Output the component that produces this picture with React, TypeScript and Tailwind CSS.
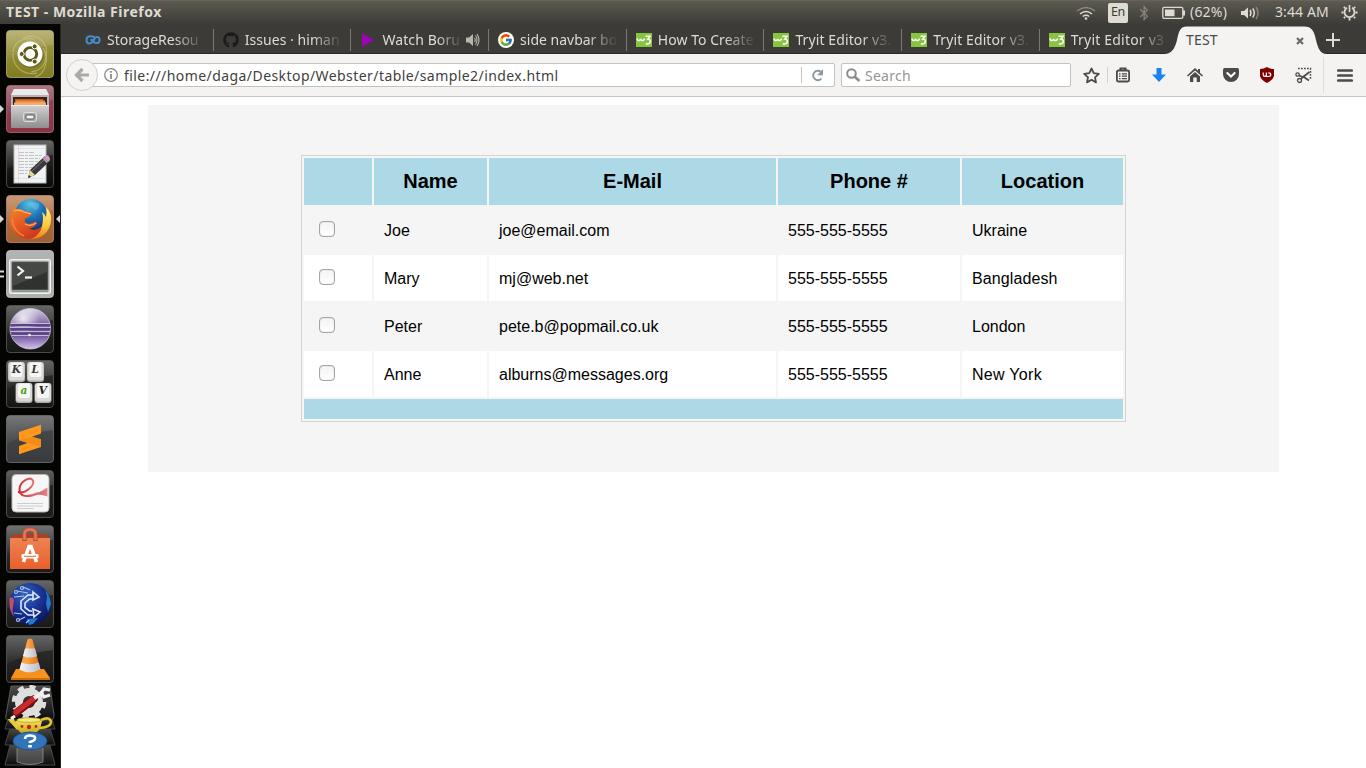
import React from "react";
import { FaGithub, FaBluetoothB } from "react-icons/fa";
import { FcGoogle } from "react-icons/fc";

const UI = "font-['Noto_Sans',sans-serif]";

function TileBase({ id, top, bottom, edge = "#6b6b69" }: { id: string; top: string; bottom: string; edge?: string }) {
  return (
    <>
      <defs>
        <linearGradient id={id} x1="0" y1="0" x2="0" y2="1">
          <stop offset="0" stopColor={top} />
          <stop offset="1" stopColor={bottom} />
        </linearGradient>
        <linearGradient id={id + "g"} x1="0" y1="0" x2="0" y2="1">
          <stop offset="0" stopColor="#fff" stopOpacity=".24" />
          <stop offset="1" stopColor="#fff" stopOpacity=".03" />
        </linearGradient>
      </defs>
      <rect x=".5" y=".5" width="47" height="47" rx="3.5" fill={`url(#${id})`} stroke={edge} strokeOpacity=".65" />
      <path d="M1 4Q1 1 4 1H44Q47 1 47 4V15Q24 17 1 29Z" fill={`url(#${id}g)`} />
    </>
  );
}

function UbuntuIcon() {
  return (
    <svg width="48" height="48" viewBox="0 0 48 48">
      <TileBase id="ub" top="#a39d4c" bottom="#817b20" edge="#c8c48c" />
      <g fill="none" stroke="#d3cf8d" strokeOpacity=".5" strokeWidth="1.3">
        <path d="M17 8C32 2 43 13 40 27C39 36 33 41 25 42" />
        <path d="M7 23C6 36 17 46 31 43" />
        <path d="M7 22C8 12 17 7 28 9" />
        <path d="M37 18C45 32 37 45 29 47" />
      </g>
      <circle cx="24.8" cy="25" r="12.8" fill="#5a5415" opacity=".5" />
      <circle cx="24" cy="24" r="12.5" fill="#fff" />
      <circle cx="24.3" cy="24" r="6.4" fill="none" stroke="#5d5714" strokeWidth="2.9" />
      <g fill="#5d5714" stroke="#fff" strokeWidth="1">
        <circle cx="15.7" cy="24" r="2.5" />
        <circle cx="28.7" cy="16.4" r="2.5" />
        <circle cx="28.7" cy="31.6" r="2.5" />
      </g>
    </svg>
  );
}

function FilesIcon() {
  return (
    <svg width="48" height="48" viewBox="0 0 48 48">
      <TileBase id="fi" top="#934b59" bottom="#8b3244" edge="#b98690" />
      <defs>
        <linearGradient id="cab" x1="0" y1="0" x2="0" y2="1">
          <stop offset="0" stopColor="#d2d2d2" />
          <stop offset="1" stopColor="#8e8e8e" />
        </linearGradient>
      </defs>
      <path d="M8 4H40L43 10V42H5V10Z" fill="#b5b5b5" />
      <path d="M8 4H40L43 10H5Z" fill="#e9e9e9" />
      <rect x="7" y="12" width="34" height="9" fill="#3d2019" />
      <path d="M9 14H37V18H9Z" fill="#ce571e" />
      <path d="M10 15.5H39V20H10Z" fill="#ee8b45" />
      <path d="M8 17.5H40V20H8Z" fill="#f3ab70" />
      <rect x="5" y="20" width="38" height="23" rx="1" fill="url(#cab)" />
      <path d="M5 20.5H43" stroke="#efefef" />
      <rect x="17.5" y="27.5" width="13" height="9" rx="2" fill="#a9a9a9" stroke="#ddd" />
      <rect x="20" y="30" width="8" height="4" rx="1" fill="#f4f4f4" stroke="#555" />
    </svg>
  );
}

function EditorIcon() {
  return (
    <svg width="48" height="48" viewBox="0 0 48 48">
      <TileBase id="ed" top="#333431" bottom="#080908" />
      <rect x="8" y="5" width="32" height="38" fill="#f1f2f2" stroke="#b9babb" />
      <g stroke="#b4b8bc" strokeWidth=".8">
        <path d="M13 12.5H29M13 15.5H36M13 18.5H34M13 21.5H35M13 24.5H31M13 27.5H28M13 30.5H26M13 33.5H21" strokeDasharray="5 1 3 1" />
        <path d="M9 8.5H39M9 38.5H39" stroke="#d9e0eb" />
      </g>
      <path d="M12.5 6V42" stroke="#eccaca" strokeWidth=".7" />
      <path d="M22 38L24 30L39 16L44 21L29 35Z" fill="#383a3c" />
      <path d="M26 31L40 18" stroke="#777" />
      <path d="M22 38L24 30L29 35Z" fill="#e8d795" />
      <path d="M22 38L23 35L25 37Z" fill="#222" />
      <path d="M38 17L41 15Q44 16 44 20L42 22Z" fill="#d39acb" />
      <path d="M36.5 18.5L38 17L42 22L40.5 23Z" fill="#aaa" />
    </svg>
  );
}

function FirefoxIcon() {
  return (
    <svg width="48" height="48" viewBox="0 0 48 48">
      <TileBase id="ff" top="#b6794f" bottom="#a16031" edge="#d2a282" />
      <defs>
        <radialGradient id="globe" cx=".45" cy=".15" r=".85">
          <stop offset="0" stopColor="#54c1e4" />
          <stop offset=".5" stopColor="#1e73b5" />
          <stop offset="1" stopColor="#182d65" />
        </radialGradient>
        <linearGradient id="fox" x1="0" y1="0" x2=".6" y2="1">
          <stop offset="0" stopColor="#f08a2c" />
          <stop offset=".55" stopColor="#e65a22" />
          <stop offset="1" stopColor="#cd3a1d" />
        </linearGradient>
        <linearGradient id="tail" x1="0" y1="0" x2="0" y2="1">
          <stop offset="0" stopColor="#fdf08a" />
          <stop offset=".6" stopColor="#fbc63a" />
          <stop offset="1" stopColor="#ee7a1e" />
        </linearGradient>
      </defs>
      <circle cx="25" cy="20.5" r="16.5" fill="url(#globe)" />
      <path d="M23 8Q28 6 33 9Q34 14 29 15Q25 12 23 8Z" fill="#7ccbe8" opacity=".45" />
      <path d="M40 12Q47 19 44.5 29Q40 44 24 44Q33 40 36 31Q38 22 36 17Q39 19 40 22Q41 17 40 12Z" fill="url(#tail)" />
      <path d="M7.5 11Q9.5 12 10.5 14Q15 13 18 16Q23 16 26 18.5Q24 22 19.5 23.5Q18 26 20 28Q24 30 28 27Q31 26 31 28.5Q28 33 23 33.5Q29 37 35 32Q36 35 32 39Q28 44 22 44Q8 43 4.5 31Q2.5 22 6 16Q6.5 13 7.5 11Z" fill="url(#fox)" />
      <path d="M8 16Q13 14 18 17L25 18.8" fill="none" stroke="#f8b868" strokeWidth="1.2" />
      <path d="M19 29Q25 32 30 28" fill="none" stroke="#f9b368" strokeWidth="1.2" />
      <path d="M6 24Q7 36 18 41" fill="none" stroke="#f39a4c" strokeWidth="1.5" opacity=".7" />
    </svg>
  );
}

function TerminalIcon() {
  return (
    <svg width="48" height="48" viewBox="0 0 48 48">
      <TileBase id="te" top="#9c9c9c" bottom="#b0b0b0" edge="#dedede" />
      <rect x="3.5" y="9.5" width="41" height="34" rx="1.5" fill="#cfcfcf" stroke="#f2f2f2" />
      <rect x="6" y="12" width="36" height="28" fill="#2f322f" stroke="#686868" />
      <path d="M7 13H41V22L7 36Z" fill="#5c5e5a" opacity=".5" />
      <path d="M11.5 16.5L17 21L11.5 25.5" fill="none" stroke="#f3f3f3" strokeWidth="2.2" />
      <path d="M19 27.5H26" stroke="#f3f3f3" strokeWidth="2.2" />
      <path d="M6 41.5H42" stroke="#839d91" />
    </svg>
  );
}

function EclipseIcon() {
  return (
    <svg width="48" height="48" viewBox="0 0 48 48">
      <TileBase id="ec" top="#353633" bottom="#151714" />
      <defs>
        <linearGradient id="ecl" x1="0" y1="0" x2="0" y2="1">
          <stop offset="0" stopColor="#d9cfe6" />
          <stop offset=".4" stopColor="#7b62a0" />
          <stop offset=".65" stopColor="#6a4f94" />
          <stop offset="1" stopColor="#d4c2ee" />
        </linearGradient>
        <radialGradient id="ecs" cx=".33" cy=".25" r=".4">
          <stop offset="0" stopColor="#fff" stopOpacity=".8" />
          <stop offset="1" stopColor="#fff" stopOpacity="0" />
        </radialGradient>
      </defs>
      <circle cx="24.3" cy="23.7" r="20.3" fill="url(#ecl)" stroke="#cfc3df" strokeWidth=".8" />
      <circle cx="24.3" cy="23.7" r="20" fill="url(#ecs)" />
      <path d="M4.3 20H44.3M4.3 24.2H44.3M5.5 28.5H43" stroke="#5a4583" strokeWidth="2.2" />
      <path d="M5 18.5H44M4.2 22.5H44.4M4.6 26.5H44M6 30.5H42.7" stroke="#c9b9de" strokeWidth="1.1" />
      <circle cx="23.5" cy="30" r="1.3" fill="#f4eefb" />
    </svg>
  );
}

function KeysIcon() {
  const keys = [
    { x: 2, y: 2, label: "K", color: "#3a3a3a" },
    { x: 21, y: 2, label: "L", color: "#3a3a3a" },
    { x: 9.5, y: 23, label: "a", color: "#4c9b13" },
    { x: 28.5, y: 23, label: "V", color: "#222" },
  ];
  return (
    <svg width="48" height="48" viewBox="0 0 48 48">
      <TileBase id="ke" top="#343532" bottom="#141613" />
      {keys.map((k) => (
        <g key={k.label} transform={`translate(${k.x} ${k.y})`}>
          <rect width="17" height="20" rx="3" fill="#a9aba8" />
          <rect x=".5" y="0" width="16" height="18.5" rx="3" fill="#d9dad7" />
          <rect x="2.5" y=".5" width="12" height="14.5" rx="2.5" fill="#f6f6f4" />
          <text x="8.3" y="11" textAnchor="middle" fill={k.color} className="font-['DejaVu_Serif',serif] text-[10.5px] font-bold italic">{k.label}</text>
        </g>
      ))}
    </svg>
  );
}

function SublimeIcon() {
  return (
    <svg width="48" height="48" viewBox="0 0 48 48">
      <TileBase id="su" top="#4b4c4e" bottom="#393a3d" edge="#818284" />
      <path d="M13 17L35 9.7V18.5L26 21.7L35 24.3V32L13 39.3V31L21.5 28L13 25.3Z" fill="#ff981b" />
      <path d="M13 25.3L35 32V24.3L26 21.7Z" fill="#ee8a18" opacity=".8" />
    </svg>
  );
}

function ReaderIcon() {
  return (
    <svg width="48" height="48" viewBox="0 0 48 48">
      <TileBase id="re" top="#2b2b2b" bottom="#1b1b1a" />
      <defs>
        <linearGradient id="swash" x1="0" y1="0" x2="1" y2="0">
          <stop offset="0" stopColor="#d32630" />
          <stop offset="1" stopColor="#e58488" />
        </linearGradient>
      </defs>
      <rect x="6" y="4.5" width="37" height="37.5" rx="4" fill="#f6f6f6" stroke="#b7b7b7" />
      <path d="M12 22C20 24 29 15 27 10.500C24 6 14 11 13.500 19C13 27 22 28 32 23" fill="none" stroke="url(#swash)" strokeWidth="2" />
      <path d="M17 25.500Q25 28 41.500 17.500V26.500Q30 22.500 22 26.500Z" fill="url(#swash)" />
      <path d="M11 33.500H37M11 36H37M11 38.500H28" stroke="#c4c4c4" strokeWidth=".8" />
    </svg>
  );
}

function SoftwareIcon() {
  return (
    <svg width="48" height="48" viewBox="0 0 48 48">
      <TileBase id="so" top="#444" bottom="#1a1b1a" />
      <defs>
        <linearGradient id="bag" x1="0" y1="0" x2="0" y2="1">
          <stop stopColor="#ee8255" />
          <stop offset="1" stopColor="#e9602a" />
        </linearGradient>
      </defs>
      <path d="M7 9H41L43 14H5Z" fill="#a64323" />
      <path d="M4 13H44V44H4Z" fill="url(#bag)" />
      <path d="M18.500 16V9Q18.500 4.500 24 4.500Q29.500 4.500 29.500 9V16" fill="none" stroke="#b84f33" strokeWidth="4.500" />
      <path d="M18.500 15V9Q18.500 4.500 24 4.500Q29.500 4.500 29.500 9V15" fill="none" stroke="#df7a5a" strokeWidth="2.500" />
      <path d="M17.500 37L23 21.500H25L30.500 37" fill="none" stroke="#fff" strokeWidth="3.600" />
      <rect x="15.500" y="29" width="17" height="4.500" rx="1" fill="#fff" />
      <path d="M18 31.300H30" stroke="#ea662f" />
    </svg>
  );
}

function NetworkIcon() {
  return (
    <svg width="48" height="48" viewBox="0 0 48 48">
      <TileBase id="ne" top="#343637" bottom="#191a18" />
      <defs>
        <radialGradient id="net" cx=".4" cy=".3" r=".7">
          <stop stopColor="#3b6ac0" />
          <stop offset=".5" stopColor="#1c3697" />
          <stop offset="1" stopColor="#0a1762" />
        </radialGradient>
      </defs>
      <circle cx="24" cy="24" r="21" fill="url(#net)" />
      <path d="M3.500 18Q6 16 8 20L6.500 31L8 37Q2.500 30 3.500 18Z" fill="#c64d67" />
      <path d="M39 10Q44 15 45 24L42 32L40 24L41 16ZM21 39L32 38L27 44L23 45Z" fill="#2278c9" />
      <g fill="none" stroke="#a9c6ee" strokeWidth="1.200">
        <path d="M24 10L17 7M22 13L11 11M18 16L8 17M16 34L8 33M19 37L13 40M23 40L20 43" />
        <circle cx="16" cy="8" r="1.500" />
        <circle cx="10" cy="12" r="1.500" />
        <circle cx="12" cy="40" r="1.500" />
      </g>
      <g fill="none" stroke="#dcebfa" strokeWidth="1.600">
        <path d="M27 15H22L15 21V29L22 35H27M27 19H23.500L19 23V27.500L23.500 31H26" />
        <path d="M27 12L33 17L27 20ZM27 29L34 32L28 37Z" />
      </g>
    </svg>
  );
}

function VlcIcon() {
  return (
    <svg width="48" height="48" viewBox="0 0 48 48">
      <TileBase id="vl" top="#333" bottom="#171817" />
      <defs>
        <linearGradient id="cone" x1="0" y1="0" x2="1" y2="0">
          <stop stopColor="#f7a145" />
          <stop offset=".35" stopColor="#fba64c" />
          <stop offset="1" stopColor="#d96b0c" />
        </linearGradient>
        <linearGradient id="band" x1="0" y1="0" x2="1" y2="0">
          <stop stopColor="#f5f6f8" />
          <stop offset="1" stopColor="#b9bdc6" />
        </linearGradient>
      </defs>
      <path d="M10 34H38L44 43H5Z" fill="#f6931c" />
      <path d="M5 43H44V45H5Z" fill="#cf6d0b" />
      <path d="M21.500 4.500Q24 2.500 26.500 4.500L34.500 35Q24 41 13.500 35Z" fill="url(#cone)" />
      <path d="M19 13.500H29L31 21Q24 24 17 21Z" fill="url(#band)" />
      <path d="M15.300 27.500Q24 31 32.700 27.500L34.500 34.500Q24 40 13.500 34.500Z" fill="url(#band)" />
    </svg>
  );
}

function FoldedStack() {
  return (
    <svg width="52" height="83" viewBox="0 0 52 83">
      <defs>
        <linearGradient id="fold" x1="0" y1="0" x2="0" y2="1">
          <stop stopColor="#4a4a4a" />
          <stop offset="1" stopColor="#0d0d0d" />
        </linearGradient>
        <linearGradient id="pot" x1="0" y1="0" x2="0" y2="1">
          <stop stopColor="#f6e75c" />
          <stop offset="1" stopColor="#c9a616" />
        </linearGradient>
      </defs>
      <path d="M6 60H46L51 80H1Z" fill="url(#fold)" stroke="#4a4a4a" />
      <path d="M13 63V77Q26 82 39 77V63" fill="#777" fillOpacity=".5" stroke="#aaa" strokeOpacity=".6" />
      <path d="M6 43H46L51 60H1Z" fill="url(#fold)" stroke="#444" />
      <path d="M6 27H46L51 44H1Z" fill="url(#fold)" stroke="#444" />
      <path d="M7 1H46L50 30Q50 35 46 35H4Q1 35 2 30Z" fill="url(#fold)" stroke="#5a5a5a" />
      <circle cx="25" cy="17" r="10" fill="none" stroke="#dedede" strokeWidth="8" />
      <circle cx="25" cy="17" r="15" fill="none" stroke="#dedede" strokeWidth="4.500" strokeDasharray="6 5.780" />
      <path d="M12 28L30 14" stroke="#7c0d11" strokeWidth="7.500" strokeLinecap="round" />
      <path d="M12 27.300L30 13.300" stroke="#cb2a2d" strokeWidth="5" strokeLinecap="round" />
      <path d="M30 13L38 8" stroke="#efefef" strokeWidth="4" />
      <path d="M46 5L40 4L37 8L40 12L46 10" fill="none" stroke="#efefef" strokeWidth="3" />
      <path d="M11 31L8 33L9 37" stroke="#efefef" strokeWidth="3" fill="none" />
      <path d="M37 35Q46 31 47 37Q47 42 36 43" fill="none" stroke="#e0c52c" strokeWidth="2.600" />
      <path d="M13 45L5 36L4 34L8 34L14 38Z" fill="#e6cd38" />
      <path d="M12 36Q25 31 38 36L36 44L31 49H18L13 44Z" fill="url(#pot)" />
      <ellipse cx="25" cy="35" rx="12" ry="2.300" fill="#f7ea7d" stroke="#b89b1c" strokeWidth=".7" />
      <g fill="#bc2726">
        <circle cx="25" cy="42" r="2.200" />
        <circle cx="18" cy="41.500" r="1.400" />
        <circle cx="32" cy="41.500" r="1.400" />
      </g>
      <ellipse cx="26" cy="56" rx="17" ry="9" fill="#3274b7" stroke="#1d548d" />
      <path d="M21 54Q21 50.500 26 50.500Q32 50.500 31 54Q30 56 26 57V58" fill="none" stroke="#fff" strokeWidth="2.600" />
      <rect x="24" y="60" width="4" height="2.600" rx="1" fill="#fff" />
    </svg>
  );
}

function LauncherRow({ children, left, right }: { children: React.ReactNode; left?: "arrow" | "pips"; right?: boolean }) {
  return (
    <div className="flex h-12 w-full shrink-0 items-center">
      <div className="flex w-1.5 shrink-0">
        {left === "arrow" && <svg width="4" height="8" viewBox="0 0 4 8"><path d="M0 0L4 4L0 8Z" fill="#d8d8d6" /></svg>}
        {left === "pips" && <svg width="4" height="8" viewBox="0 0 4 8"><path d="M0 1.5H4M0 6.5H4" stroke="#d8d8d6" strokeWidth="2" /></svg>}
      </div>
      {children}
      <div className="flex w-1.5 shrink-0 justify-end">
        {right && <svg width="4" height="8" viewBox="0 0 4 8"><path d="M4 0L0 4L4 8Z" fill="#d8d8d6" /></svg>}
      </div>
    </div>
  );
}

function Launcher() {
  return (
    <aside className="flex w-[61px] shrink-0 flex-col gap-[7px] border-r border-[#242422] bg-[#040503] pt-1.5">
      <LauncherRow><UbuntuIcon /></LauncherRow>
      <LauncherRow left="arrow"><FilesIcon /></LauncherRow>
      <LauncherRow><EditorIcon /></LauncherRow>
      <LauncherRow left="arrow" right><FirefoxIcon /></LauncherRow>
      <LauncherRow left="pips"><TerminalIcon /></LauncherRow>
      <LauncherRow><EclipseIcon /></LauncherRow>
      <LauncherRow><KeysIcon /></LauncherRow>
      <LauncherRow><SublimeIcon /></LauncherRow>
      <LauncherRow><ReaderIcon /></LauncherRow>
      <LauncherRow><SoftwareIcon /></LauncherRow>
      <LauncherRow><NetworkIcon /></LauncherRow>
      <LauncherRow><VlcIcon /></LauncherRow>
      <div className="-mt-[5px] flex justify-center"><FoldedStack /></div>
    </aside>
  );
}

function TopPanel() {
  return (
    <header className="flex h-6 shrink-0 items-center justify-between border-t border-[#65635a] bg-gradient-to-b from-[#5c5a51] to-[#3d3c38] pr-2 pl-1.5 text-[#dfdbd2]">
      <span className="-mt-0.5 text-[14px] font-bold tracking-[0.49px] whitespace-nowrap">TEST - Mozilla Firefox</span>
      <div className="flex items-center">
        <svg width="20" height="14" viewBox="0 0 20 14" fill="none" stroke="#dfdbd2" strokeWidth="1.5">
          <path d="M1 5Q10-2 19 5" opacity=".4" /><path d="M4 8Q10 3 16 8" /><path d="M6.8 10.5Q10 8 13.2 10.5" /><circle cx="10" cy="12.5" r=".6" fill="#dfdbd2" />
        </svg>
        <span className="ml-3 flex h-5 w-5 items-center justify-center rounded-[2px] bg-[#dfdbd2] text-[12.5px] tracking-[-0.4px] text-[#3c3b37]">En</span>
        <FaBluetoothB className="ml-2 h-4 w-4 text-[#85837b]" />
        <svg className="ml-2.5" width="24" height="14" viewBox="0 0 24 14">
          <rect x=".8" y="1.3" width="20" height="11" rx="1.2" fill="none" stroke="#dfdbd2" strokeWidth="1.3" /><rect x="3" y="3.5" width="9.5" height="6.7" fill="#dfdbd2" /><path d="M22 4.5V9.5" stroke="#dfdbd2" strokeWidth="2" />
        </svg>
        <span className="-mt-0.5 ml-1 w-[38px] text-[14px] tracking-[0.2px]">(62%)</span>
        <svg className="ml-3" width="22" height="16" viewBox="0 0 22 16" fill="none" stroke="#dfdbd2" strokeWidth="1.5">
          <path d="M1 6H4L8 2.5V13.5L4 10H1Z" fill="#dfdbd2" stroke="none" /><path d="M10 5Q12 8 10 11M12.7 3.5Q16 8 12.7 12.5" /><path d="M16 2Q20 8 16 14" opacity=".4" />
        </svg>
        <span className="-mt-0.5 ml-[13px] w-[54px] text-[14px] tracking-[0.1px] whitespace-nowrap">3:44 AM</span>
        <svg className="ml-3" width="17" height="17" viewBox="0 0 17 17" fill="none" stroke="#dfdbd2">
          <path d="M11 3.8A5 5 0 1 1 6 3.8" strokeWidth="1.8" /><path d="M8.5 1V8" strokeWidth="1.6" /><path d="M2.8 2.8L4.2 4.2M14.2 2.8L12.8 4.2M.5 8.500H2.5M14.500 8.500H16.500M2.800 14.200L4.200 12.800M14.200 14.200L12.800 12.800M8.500 14V16.500" strokeWidth="1.8" />
        </svg>
      </div>
    </header>
  );
}

function W3Icon() {
  return (
    <svg width="16" height="14" viewBox="0 0 16 14"><rect width="16" height="14" fill="#87c540" /><path d="M1 5.5Q1.5 8 3.2 7.5Q4.8 7 4.8 5.8Q5 8 7 7.5Q8.500 7 8.500 5.500" fill="none" stroke="#fff" strokeWidth="1.5" /><path d="M9.500 3.300H14L11.800 6Q14.500 6 14.300 8.600Q13.900 11.700 9.800 10.800" fill="none" stroke="#fff" strokeWidth="1.5" /></svg>
  );
}

const w3 = <W3Icon />;
const tabs = [
  { title: "StorageResou", tracking: "tracking-[0px]", icon: <svg width="16" height="10" viewBox="0 0 16 10"><path d="M10.500 3.200C8 .5 1.500 .2 1.500 4.900C1.500 9.600 6 9.200 8 6L9.300 4C11 .8 14.600 1.700 14.600 4.900C14.600 8.700 10 9 7 5.800M5.500 5H10" fill="none" stroke="#468cca" strokeWidth="2" /></svg> },
  { title: "Issues · himan", tracking: "tracking-[0.05px]", icon: <FaGithub className="h-4 w-4 text-[#1b1b1b]" /> },
  { title: "Watch Boru", tracking: "tracking-[0.1px]", sound: true, icon: <svg width="16" height="14" viewBox="0 0 16 14"><path d="M2 0L14 7L2 14Z" fill="#9a04b4" /></svg> },
  { title: "side navbar bo", tracking: "tracking-[0px]", icon: <span className="flex h-4 w-4 items-center justify-center rounded-full bg-white"><FcGoogle className="h-3.5 w-3.5" /></span> },
  { title: "How To Create", tracking: "tracking-[0.05px]", icon: w3 },
  { title: "Tryit Editor v3.", tracking: "tracking-[0.1px]", icon: w3 },
  { title: "Tryit Editor v3.", tracking: "tracking-[0.1px]", icon: w3 },
  { title: "Tryit Editor v3", tracking: "tracking-[0.2px]", icon: w3 },
];

function TabStrip() {
  return (
    <div className="relative flex h-[30px] shrink-0 items-center border-b border-[#292825] bg-[#3c3b37] pt-0.5 pl-[15px] text-[14px] text-[#dfdbd2]">
      {tabs.map((tab, i) => (
        <div key={i} className={`flex h-[22px] w-[137.7px] shrink-0 items-center pl-[9px] ${i < 7 ? "border-r border-[#7a7974]" : ""}`}>
          <span className="flex w-4 justify-center">{tab.icon}</span>
          <span className={`ml-1.5 whitespace-nowrap ${tab.sound ? "w-[81px]" : "w-[98px]"} ${tab.tracking} [mask-image:linear-gradient(to_right,#000_68%,transparent)]`}>{tab.title}</span>
          {tab.sound && <svg className="ml-[3px]" width="14" height="14" viewBox="0 0 14 14" fill="none" stroke="#b8b5ad" strokeWidth="1.1"><path d="M0 4.5H3L7 1V13L3 9.5H0Z" fill="#b8b5ad" stroke="none" /><path d="M8.5 5Q10 7 8.5 9M9.5 2.5Q12.500 7 9.5 11.5M11 1Q15 7 11 13" /></svg>}
        </div>
      ))}
      <div className="absolute top-0 left-[1103px] z-10 h-[31px] w-[164px]">
        <svg width="164" height="31" viewBox="0 0 164 31"><path d="M0 30C8 30 11 24 13 16C15 7 16 2.500 23 2.500H140C148 2.500 150 7 152 16C154 24 156 30 163 30V31H0Z" fill="#f4f3f2" /></svg>
        <div className="absolute inset-0 flex items-center justify-between pr-6 pl-[22px] text-[#4b4945]">
          <span className="text-[14px] tracking-[0.2px]">TEST</span>
          <svg className="mt-0.5" width="8" height="8" viewBox="0 0 8 8"><path d="M1 1L7 7M7 1L1 7" stroke="#6c6b69" strokeWidth="2.3" /></svg>
        </div>
      </div>
      <svg className="absolute top-[9px] left-[1265px] z-20" width="14" height="14" viewBox="0 0 14 14"><path d="M7 0V14M0 7H14" stroke="#dfdbd2" strokeWidth="2" /></svg>
    </div>
  );
}

function ToolbarIcons() {
  return (
    <div className="flex items-center text-[#4b4b4b]">
      <svg className="ml-3" width="17" height="17" viewBox="0 0 17 17"><path d="M8.5 1.5L10.7 6.2L15.8 6.8L12 10.3L13 15.4L8.5 12.8L4 15.4L5 10.3L1.2 6.8L6.3 6.2Z" fill="none" stroke="#4b4b4b" strokeWidth="1.8" strokeLinejoin="round" /></svg>
      <div className="ml-[7px] h-4 w-px bg-[#d2d1cf]" />
      <svg className="ml-[7px]" width="16" height="16" viewBox="0 0 16 16"><path d="M5.500 3V1.500H10.500V3" fill="none" stroke="currentColor" strokeWidth="2" /><rect x="1.900" y="3.500" width="12.200" height="11" rx="1.500" fill="none" stroke="currentColor" strokeWidth="1.800" /><path d="M4 6.800H5.500M6.800 6.800H12M4 9.200H5.500M6.800 9.200H12M4 11.600H5.500M6.800 11.600H12" stroke="currentColor" strokeWidth="1.200" /></svg>
      <svg className="ml-5" width="16" height="16" viewBox="0 0 16 16"><path d="M5.500 1H10.500V7.500H15L8 15L1 7.500H5.500Z" fill="#1784ef" /></svg>
      <svg className="ml-5" width="16" height="16" viewBox="0 0 16 16"><path d="M8 1L0 8.5L1 9.5L8 3.5L15 9.5L16 8.5L13 5.7V2H11V3.8Z" fill="currentColor" /><path d="M3 9.5L8 5L13 9.5V15H9.7V10.5H6.3V15H3Z" fill="currentColor" /></svg>
      <svg className="ml-5" width="16" height="16" viewBox="0 0 16 16"><path d="M1.5 1H14.5Q16 1 16 2.5V7A8 8 0 0 1 0 7V2.5Q0 1 1.5 1Z" fill="currentColor" /><path d="M4.3 6L8 9.5L11.7 6" fill="none" stroke="#fff" strokeWidth="2" strokeLinecap="round" /></svg>
      <svg className="ml-5" width="16" height="16" viewBox="0 0 16 16"><path d="M8 0Q11 2 15 2V9Q14 13 8 16Q2 13 1 9V2Q5 2 8 0Z" fill="#800000" /><path d="M4.200 5.500V7.500Q4.200 9.400 5.800 9.400Q7.400 9.400 7.400 7.500V5.500V9.500H9.300Q11.800 9.500 11.800 7.600Q11.800 5.800 9.300 5.800" fill="none" stroke="#fff" strokeWidth="1.200" /></svg>
      <svg className="ml-5" width="17" height="17" viewBox="0 0 17 17" fill="none" stroke="currentColor"><path d="M3 1.500H15.500V13" strokeWidth="1.500" strokeDasharray="1.7 1.3" /><circle cx="2.600" cy="7.500" r="1.700" strokeWidth="1.300" /><circle cx="4.500" cy="13.500" r="2" strokeWidth="1.300" /><path d="M4 8.500L8 10L14.500 5M6 12L8.500 9.500M8 9.500L14 13.500" strokeWidth="1.700" /></svg>
      <div className="ml-[11px] h-[36px] w-px bg-[#dfdedc]" />
      <svg className="ml-[13px]" width="16" height="16" viewBox="0 0 16 16"><path d="M1.3 3.5H14.7M1.3 8.5H14.7M1.3 13.5H14.7" stroke="currentColor" strokeWidth="2.7" strokeLinecap="round" /></svg>
    </div>
  );
}

function Toolbar() {
  return (
    <div className="flex h-[43px] shrink-0 items-center border-b border-[#c7c6c4] bg-[#f4f3f2] pl-[5px]">
      <div className="z-10 flex h-8 w-8 shrink-0 items-center justify-center rounded-full border border-[#d2d1cf] bg-[#f5f4f3]">
        <svg width="16" height="16" viewBox="0 0 16 16"><path d="M15 8H3M8.5 2L2.5 8L8.5 14" fill="none" stroke="#a9a9a8" strokeWidth="3.2" /></svg>
      </div>
      <div className="-ml-4 flex h-6 w-[753px] shrink-0 items-center rounded-[2px] border border-[#c3c2c0] bg-white pl-[21px]">
        <svg width="14" height="14" viewBox="0 0 14 14"><circle cx="7" cy="7" r="6.3" fill="none" stroke="#858585" strokeWidth="1.2" /><path d="M7 6V11M7 3V4.7" stroke="#858585" strokeWidth="1.7" /></svg>
        <span className="ml-1.5 text-[14px] tracking-[0.43px] whitespace-nowrap text-[#403f3d]">file:///home/daga/Desktop/Webster/table/sample2/index.html</span>
        <div className="ml-auto h-4 w-px bg-[#c6c5c3]" />
        <svg className="mr-[10px] ml-[9px]" width="13" height="13" viewBox="0 0 13 13"><path d="M10.5 9.5A4.7 4.7 0 1 1 10 3" fill="none" stroke="#8c99a5" strokeWidth="1.9" /><path d="M12 0V6.3H6Z" fill="#8c99a5" /></svg>
      </div>
      <div className="ml-1.5 flex h-6 w-[230px] shrink-0 items-center rounded-[2px] border border-[#c3c2c0] bg-white pl-1">
        <svg width="15" height="15" viewBox="0 0 15 15"><circle cx="5.5" cy="5.5" r="4.3" fill="none" stroke="#8c8b8a" strokeWidth="2" /><path d="M8.7 8.7L13.5 13" stroke="#8c8b8a" strokeWidth="2.5" /></svg>
        <span className="ml-1 text-[14px] tracking-[0.25px] text-[#969593]">Search</span>
      </div>
      <ToolbarIcons />
    </div>
  );
}

const people = [
  ["Joe", "joe@email.com", "555-555-5555", "Ukraine"],
  ["Mary", "mj@web.net", "555-555-5555", "Bangladesh"],
  ["Peter", "pete.b@popmail.co.uk", "555-555-5555", "London"],
  ["Anne", "alburns@messages.org", "555-555-5555", "New York"],
];
const columns = "grid grid-cols-[68px_113px_287px_182px_161px] gap-0.5";

function DataTable() {
  return (
    <div className="flex w-[825px] flex-col gap-0.5 border border-[#d3d3d3] p-0.5 font-['Liberation_Sans',sans-serif] text-[16px] text-black">
      <div className={`${columns} h-[47px] text-[20px] font-bold`}>
        {["", "Name", "E-Mail", "Phone #", "Location"].map((h) => (
          <div key={h} className="flex items-center justify-center bg-[#add8e6] pb-0.5">{h}</div>
        ))}
      </div>
      {people.map((row, i) => (
        <div key={row[0]} className={`${columns} h-[46px]`}>
          <div className={`flex items-center pb-0.5 pl-[15px] ${i % 2 ? "bg-white" : ""}`}>
            <input type="checkbox" aria-label={row[0]} className="h-4 w-4 appearance-none rounded-[4px] border border-[#a5a5a5] bg-gradient-to-b from-[#f3f3f3] to-white shadow-[inset_0_0_1px_#aaa]" />
          </div>
          {row.map((cell) => (
            <div key={cell} className={`flex items-center pt-0.5 pl-2.5 ${i % 2 ? "bg-white" : ""} ${cell === "New York" ? "tracking-[0.3px]" : cell === "Bangladesh" ? "tracking-[0.1px]" : ""}`}>{cell}</div>
          ))}
        </div>
      ))}
      <div className="h-5 bg-[#add8e6]" />
    </div>
  );
}

export default function App() {
  return (
    <div className={`flex h-[768px] w-[1366px] flex-col overflow-hidden bg-white ${UI}`}>
      <TopPanel />
      <div className="flex min-h-0 flex-1">
        <Launcher />
        <div className="flex min-w-0 flex-1 flex-col">
          <TabStrip />
          <Toolbar />
          <main className="flex flex-1 items-start bg-white pt-2 pl-[87px]">
            <section className="flex h-[367px] w-[1131px] items-start justify-center bg-[#f5f5f5] pt-[50px]">
              <DataTable />
            </section>
          </main>
        </div>
      </div>
    </div>
  );
}
